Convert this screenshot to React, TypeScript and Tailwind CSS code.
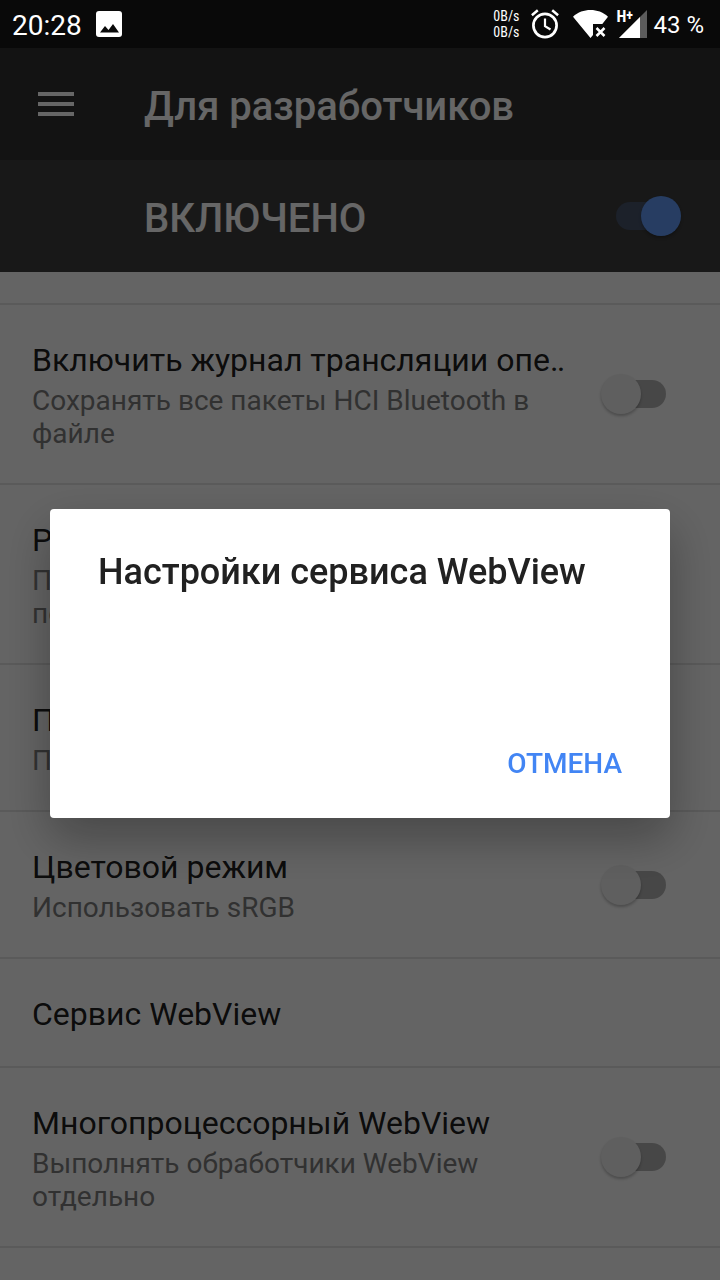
import { useState } from "react";

type Setting = {
  id: string;
  title: string;
  summary?: string;
  toggle?: boolean;
};

const settings: Setting[] = [
  {
    id: "hci-log",
    title: "Включить журнал трансляции опе‥",
    summary: "Сохранять все пакеты HCI Bluetooth в файле",
    toggle: true,
  },
  { id: "mode", title: "Режим", summary: "ПК\nпо USB" },
  { id: "search", title: "Поиск", summary: "Показывать" },
  {
    id: "srgb",
    title: "Цветовой режим",
    summary: "Использовать sRGB",
    toggle: true,
  },
  { id: "webview", title: "Сервис WebView" },
  {
    id: "multiprocess",
    title: "Многопроцессорный WebView",
    summary: "Выполнять обработчики WebView отдельно",
    toggle: true,
  },
];

function Switch({ id, label, on = false }: { id: string; label: string; on?: boolean }) {
  const [checked, setChecked] = useState(on);

  return (
    <input
      id={id}
      type="checkbox"
      role="switch"
      aria-label={label}
      checked={checked}
      onChange={() => setChecked(!checked)}
      className="relative h-7 w-[57px] shrink-0 appearance-none rounded-full bg-[#b2b2b2] before:absolute before:-top-1.5 before:-left-2 before:size-10 before:rounded-full before:bg-[#ededed] before:shadow-[0_2px_3px_rgba(0,0,0,0.25)] checked:bg-[#46536a] checked:before:left-[25px] checked:before:bg-[#6199f5]"
    />
  );
}

function StatusBar() {
  return (
    <div className="relative z-20 flex h-12 items-center justify-between bg-[#090909] pr-4 pl-3 text-white">
      <div className="flex items-center gap-3.5">
        <span className="pt-1 text-[28px] leading-8">20:28</span>
        <svg viewBox="0 0 26 26" className="size-[26px]">
          <rect width="26" height="26" rx="3" fill="#fff" />
          <path d="M4 21.500 9 15l3.500 4L17 13l6 8.500z" fill="#090909" />
        </svg>
      </div>

      <div className="flex items-center">
        <div className="mr-3 font-['Roboto_Condensed','Liberation_Sans_Narrow',Roboto,sans-serif] text-sm leading-4">
          <div>0B/s</div>
          <div>0B/s</div>
        </div>
        {/* alarm */}
        <svg viewBox="0 0 28 30" className="mr-3.5 h-[30px] w-7" fill="none" stroke="#fff">
          <circle cx="14" cy="16.500" r="11.600" strokeWidth="2.700" />
          <path d="M14 9.500v7.700l5.500 3.300" strokeWidth="2.200" />
          <path d="M.9 6.200 6.800 1.200M21.200 1.200l5.900 5" strokeWidth="2.500" />
        </svg>
        {/* wifi without internet */}
        <svg viewBox="0 0 35 28" className="mr-2 h-7 w-[35px]">
          <path d="M0 6.700C5 2 11 0 17.500 0S30 2 35 6.700L29.300 14H20v11l-2.500 3z" fill="#fff" />
          <path d="m23.500 18 8 8M31.500 18l-8 8" stroke="#fff" strokeWidth="2.500" />
        </svg>
        {/* mobile signal */}
        <div className="relative mr-1.5 flex w-[31px] justify-end">
          <svg viewBox="0 0 28 28" className="size-7">
            <path d="M28 0v28H0z" fill="#5c5c5c" />
            <path d="M21 7v21H0z" fill="#fff" />
          </svg>
          <span className="absolute top-0 left-0 flex items-start font-['Roboto_Condensed','Liberation_Sans_Narrow',Roboto,sans-serif] font-bold">
            <span className="text-base leading-[14px]">H</span>
            <span className="text-sm leading-[10px]">+</span>
          </span>
        </div>
        <span className="pt-0.5 text-2xl">43 %</span>
      </div>
    </div>
  );
}

function SettingRow({ setting }: { setting: Setting }) {
  return (
    <li className="flex items-center gap-[39px] border-b-2 border-[#e0e0e0] py-8 pr-[54px] pl-8">
      <label htmlFor={setting.id} className="min-w-0 flex-1">
        <span className="block truncate pt-[3px] text-[32px] leading-10 text-black/90">
          {setting.title}
        </span>
        {setting.summary && (
          <span className="mt-1 mb-px block text-[28px] leading-[33px] whitespace-pre-line text-[#7c7c7c]">
            {setting.summary}
          </span>
        )}
      </label>
      {setting.toggle && <Switch id={setting.id} label={setting.title} />}
    </li>
  );
}

function WebViewDialog({ onClose }: { onClose: () => void }) {
  return (
    <div className="fixed inset-0 z-10 flex items-center bg-black/60 px-[50px] pt-[47px]">
      <div
        role="dialog"
        aria-modal="true"
        aria-labelledby="dialog-title"
        className="w-full rounded bg-white px-12 pt-10 pb-[22px] shadow-[0_20px_48px_rgba(0,0,0,0.3)]"
      >
        <h2 id="dialog-title" className="text-4xl leading-[47px] font-medium text-[#212121]">
          Настройки сервиса WebView
        </h2>
        <div className="h-[136px]" />
        <div className="flex justify-end">
          <button
            type="button"
            onClick={onClose}
            className="h-16 text-[28px] leading-8 font-medium text-[#4285f4]"
          >
            ОТМЕНА
          </button>
        </div>
      </div>
    </div>
  );
}

function App() {
  const [open, setOpen] = useState(true);

  return (
    <div className="min-h-screen bg-[#fafafa] font-['Roboto',sans-serif]">
      <StatusBar />

      <header className="flex h-28 items-center gap-[70px] bg-[#303030] px-[38px] text-white">
        <button type="button" aria-label="Меню">
          <svg viewBox="0 0 36 24" className="h-6 w-9" fill="currentColor">
            <path d="M0 0h36v4H0zM0 10h36v4H0zM0 20h36v4H0z" />
          </svg>
        </button>
        <h1 className="pt-1.5 text-[40px] leading-12 font-medium">Для разработчиков</h1>
      </header>

      <div className="flex h-28 items-center justify-between bg-[#3c3c3c] pr-[47px] pl-36 text-white">
        <label htmlFor="enabled" className="pt-1.5 text-[40px] leading-12 font-medium">
          ВКЛЮЧЕНО
        </label>
        <Switch id="enabled" label="ВКЛЮЧЕНО" on />
      </div>

      <ul>
        <li className="h-[33px] border-b-2 border-[#e0e0e0]" />
        {settings.map((setting) => (
          <SettingRow key={setting.id} setting={setting} />
        ))}
      </ul>

      {open && <WebViewDialog onClose={() => setOpen(false)} />}
    </div>
  );
}

export default App;
